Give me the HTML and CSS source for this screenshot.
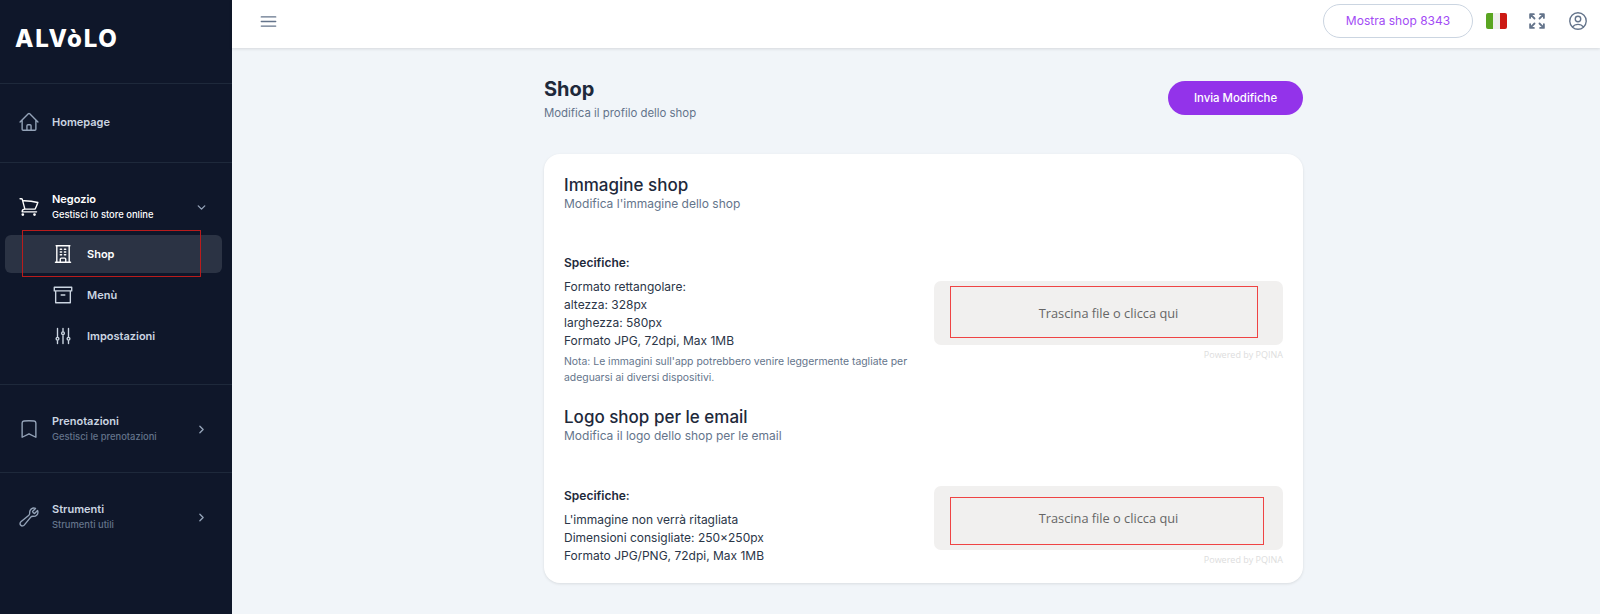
FILE: index.html
```html
<!DOCTYPE html>
<html lang="it">
<head>
    <meta charset="UTF-8">
    <meta name="viewport" content="width=device-width, initial-scale=1.0">
    <title>Shop | Alvolo</title>
    <link rel="stylesheet" href="styles.css">
</head>
<body>
    <aside class="sidebar">
        <div class="logo-row"><span class="logo">ALVòLO</span></div>

        <div class="nav-section home-section">
            <div class="nav-row">
                <svg class="nav-icon" viewBox="0 0 24 24"><path d="M2.25 12l8.954-8.955c.44-.439 1.152-.439 1.591 0L21.75 12M4.5 9.75v10.125c0 .621.504 1.125 1.125 1.125H9.75v-4.875c0-.621.504-1.125 1.125-1.125h2.25c.621 0 1.125.504 1.125 1.125V21h4.125c.621 0 1.125-.504 1.125-1.125V9.75M8.25 21h8.25"/></svg>
                <div class="nav-text"><div class="nav-title">Homepage</div></div>
            </div>
        </div>

        <div class="nav-section shop-section">
            <div class="nav-row active">
                <svg class="nav-icon" viewBox="0 0 24 24"><path d="M2.25 3h1.386c.51 0 .955.343 1.087.835l.383 1.437M7.5 14.25a3 3 0 00-3 3h15.75m-12.75-3h11.218c1.121-2.3 2.1-4.684 2.924-7.138a60.114 60.114 0 00-16.536-1.84M7.5 14.25L5.106 5.272M6 20.25a.75.75 0 11-1.5 0 .75.75 0 011.5 0zm12.75 0a.75.75 0 11-1.5 0 .75.75 0 011.5 0z"/></svg>
                <div class="nav-text">
                    <div class="nav-title">Negozio</div>
                    <div class="nav-sub">Gestisci lo store online</div>
                </div>
                <svg class="nav-arrow" viewBox="0 0 24 24"><path d="M6 9l6 6 6-6"/></svg>
            </div>
            <div class="sub-list">
                <div class="sub-item current">
                    <svg class="sub-icon" viewBox="0 0 24 24"><path d="M3.75 21h16.5M4.5 3h15M5.25 3v18m13.5-18v18M9 6.75h1.5m-1.5 3h1.5m-1.5 3h1.5m3-6H15m-1.5 3H15m-1.5 3H15M9 21v-3.375c0-.621.504-1.125 1.125-1.125h3.75c.621 0 1.125.504 1.125 1.125V21"/></svg>
                    <span>Shop</span>
                    <div class="mark mark-nav"></div>
                </div>
                <div class="sub-item">
                    <svg class="sub-icon" viewBox="0 0 24 24"><path d="M2.5 3.5h19v4h-19zM4 7.5v13h16v-13M10 12h4"/></svg>
                    <span>Menù</span>
                </div>
                <div class="sub-item">
                    <svg class="sub-icon" viewBox="0 0 24 24"><path d="M6 13.5V3.75m0 9.75a1.5 1.5 0 010 3m0-3a1.5 1.5 0 000 3m0 3.75V16.5m12-3V3.75m0 9.75a1.5 1.5 0 010 3m0-3a1.5 1.5 0 000 3m0 3.75V16.5m-6-9V3.75m0 3.75a1.5 1.5 0 010 3m0-3a1.5 1.5 0 000 3m0 9.75V10.5"/></svg>
                    <span>Impostazioni</span>
                </div>
            </div>
        </div>

        <div class="nav-section group-section">
            <div class="nav-row">
                <svg class="nav-icon" viewBox="0 0 24 24"><path d="M17.593 3.322c1.1.128 1.907 1.077 1.907 2.185V21L12 17.25 4.5 21V5.507c0-1.108.806-2.057 1.907-2.185a48.507 48.507 0 0111.186 0z"/></svg>
                <div class="nav-text">
                    <div class="nav-title">Prenotazioni</div>
                    <div class="nav-sub">Gestisci le prenotazioni</div>
                </div>
                <svg class="nav-arrow" viewBox="0 0 24 24"><path d="M9 6l6 6-6 6"/></svg>
            </div>
        </div>

        <div class="nav-section group-section">
            <div class="nav-row">
                <svg class="nav-icon" viewBox="0 0 24 24"><path d="M21.75 6.75a4.5 4.5 0 01-4.884 4.484c-1.076-.091-2.264.071-2.95.904l-7.152 8.684a2.548 2.548 0 11-3.586-3.586l8.684-7.152c.833-.686.995-1.874.904-2.95a4.5 4.5 0 016.336-4.486l-3.276 3.276a3.004 3.004 0 002.25 2.25l3.276-3.276c.256.565.398 1.192.398 1.852z"/></svg>
                <div class="nav-text">
                    <div class="nav-title">Strumenti</div>
                    <div class="nav-sub">Strumenti utili</div>
                </div>
                <svg class="nav-arrow" viewBox="0 0 24 24"><path d="M9 6l6 6-6 6"/></svg>
            </div>
        </div>
    </aside>

    <div class="main">
        <header class="topbar">
            <svg class="menu-icon" viewBox="0 0 24 24"><path d="M3.75 6.75h16.5M3.75 12h16.5m-16.5 5.25h16.5"/></svg>
            <div class="topbar-right">
                <div class="shop-pill">Mostra shop 8343</div>
                <div class="flag"><span class="green"></span><span class="white"></span><span class="red"></span></div>
                <svg class="expand" viewBox="0 0 24 24"><path d="M3.75 3.75v4.5m0-4.5h4.5m-4.5 0L9 9M3.75 20.25v-4.5m0 4.5h4.5m-4.5 0L9 15M20.25 3.75h-4.5m4.5 0v4.5m0-4.5L15 9m5.25 11.25h-4.5m4.5 0v-4.5m0 4.5L15 15"/></svg>
                <svg class="user-icon" viewBox="0 0 24 24"><path d="M17.982 18.725A7.488 7.488 0 0012 15.75a7.488 7.488 0 00-5.982 2.975m11.963 0a9 9 0 10-11.963 0m11.963 0A8.966 8.966 0 0112 21a8.966 8.966 0 01-5.982-2.275M15 9.75a3 3 0 11-6 0 3 3 0 016 0z"/></svg>
            </div>
        </header>

        <div class="content">
            <div class="page-head">
                <div>
                    <h1>Shop</h1>
                    <div class="page-sub">Modifica il profilo dello shop</div>
                </div>
                <button class="send-btn">Invia Modifiche</button>
            </div>

            <div class="card">
                <section class="block first">
                    <h2>Immagine shop</h2>
                    <div class="block-sub">Modifica l'immagine dello shop</div>
                    <div class="spec-row">
                        <div class="spec-text">
                            <div class="spec-title">Specifiche:</div>
                            <p>Formato rettangolare:</p>
                            <p>altezza: 328px</p>
                            <p>larghezza: 580px</p>
                            <p>Formato JPG, 72dpi, Max 1MB</p>
                            <p class="note">Nota: Le immagini sull'app potrebbero venire leggermente tagliate per adeguarsi ai diversi dispositivi.</p>
                        </div>
                        <div class="upload">
                            <div class="drop">Trascina file o clicca qui<div class="mark mark-one"></div></div>
                            <div class="powered">Powered by PQINA</div>
                        </div>
                    </div>
                </section>

                <section class="block">
                    <h2>Logo shop per le email</h2>
                    <div class="block-sub">Modifica il logo dello shop per le email</div>
                    <div class="spec-row">
                        <div class="spec-text">
                            <div class="spec-title">Specifiche:</div>
                            <p>L'immagine non verrà ritagliata</p>
                            <p>Dimensioni consigliate: 250×250px</p>
                            <p>Formato JPG/PNG, 72dpi, Max 1MB</p>
                        </div>
                        <div class="upload">
                            <div class="drop">Trascina file o clicca qui<div class="mark mark-two"></div></div>
                            <div class="powered">Powered by PQINA</div>
                        </div>
                    </div>
                </section>
            </div>
        </div>
    </div>
</body>
</html>
```

FILE: styles.css
```css
:root {
    --navy: #0f172a;
    --purple: #9333ea;
    --line: #1e293b;
    --slate: #64748b;
    --ink: #1e293b;
}
* {
    box-sizing: border-box;
}
body {
    margin: 0;
    height: 614px;
    overflow: hidden;
    display: flex;
    font-family: 'Inter', sans-serif;
    background: #f1f5f9;
    color: var(--ink);
}
svg {
    fill: none;
    stroke: currentColor;
    stroke-width: 1.5;
    stroke-linecap: round;
    stroke-linejoin: round;
    flex-shrink: 0;
}

/* sidebar */
.sidebar {
    width: 232px;
    flex-shrink: 0;
    background: var(--navy);
    color: #fff;
}
.logo-row {
    height: 84px;
    padding: 23px 0 0 15px;
    border-bottom: 1px solid var(--line);
}
.logo {
    font-size: 24px;
    line-height: 32px;
    font-weight: 800;
    letter-spacing: 1.7px;
}
.nav-section {
    border-bottom: 1px solid var(--line);
}
.home-section {
    height: 79px;
    padding-top: 20px;
}
.shop-section {
    height: 222px;
    padding-top: 26px;
}
.group-section {
    height: 88px;
    padding-top: 26px;
}
.group-section:last-child {
    border-bottom: none;
}
.nav-row {
    display: flex;
    align-items: center;
    height: 36px;
    padding: 0 24px 0 18px;
    color: #94a3b8;
}
.nav-icon {
    width: 22px;
    height: 22px;
    margin-right: 12px;
}
.nav-text {
    flex: 1;
}
.nav-title {
    font-size: 11px;
    line-height: 15px;
    font-weight: 600;
    color: #cbd5e1;
}
.nav-sub {
    font-size: 9.4px;
    line-height: 15px;
    font-weight: 500;
    color: #64748b;
}
.nav-arrow {
    width: 13px;
    height: 13px;
    stroke-width: 2.5;
}
.nav-row.active,
.nav-row.active .nav-title,
.nav-row.active .nav-sub {
    color: #fff;
}
.nav-row.active .nav-arrow {
    color: #94a3b8;
}
.sub-list {
    margin-top: 10px;
}
.sub-item {
    position: relative;
    display: flex;
    align-items: center;
    height: 38px;
    margin: 0 10px 3px 5px;
    padding-left: 47px;
    font-size: 11px;
    font-weight: 600;
    color: #cbd5e1;
    border-radius: 6px;
}
.sub-item.current {
    background: #2b3344;
    color: #fff;
}
.sub-icon {
    width: 22px;
    height: 22px;
    margin-right: 13px;
}

/* red annotation boxes from the screenshot */
.mark {
    position: absolute;
    border: 1px solid #ef4444;
}
.mark-nav {
    left: 17px;
    top: -5px;
    width: 179px;
    height: 47px;
    border-color: #b91c1c;
}
.mark-one {
    left: 16px;
    top: 5px;
    width: 308px;
    height: 52px;
}
.mark-two {
    left: 16px;
    top: 11px;
    width: 314px;
    height: 48px;
}

/* topbar */
.main {
    flex: 1;
    min-width: 0;
}
.topbar {
    height: 48px;
    display: flex;
    align-items: center;
    justify-content: space-between;
    padding: 0 11px 6px 26px;
    background: #fff;
    box-shadow: 0 1px 3px rgba(0,0,0,0.12);
}
.menu-icon {
    width: 21px;
    height: 21px;
    color: #64748b;
}
.topbar-right {
    display: flex;
    align-items: center;
}
.shop-pill {
    width: 150px;
    height: 34px;
    line-height: 32px;
    text-align: center;
    font-size: 12px;
    color: #a24bf5;
    border: 1px solid #cbd5e1;
    border-radius: 17px;
}
.flag {
    display: flex;
    width: 21px;
    height: 16px;
    margin: 0 20px 0 13px;
    border-radius: 2px;
    overflow: hidden;
}
.flag span {
    flex: 1;
}
.green { background: #5aa521; }
.white { background: #eeeeee; }
.red { background: #cc1a14; }
.expand {
    width: 20px;
    height: 20px;
    margin-right: 20px;
    color: #64748b;
    stroke-width: 2.2;
}
.user-icon {
    width: 22px;
    height: 22px;
    color: #64748b;
}

/* page content */
.content {
    width: 759px;
    margin-left: 312px;
}
.page-head {
    display: flex;
    justify-content: space-between;
    align-items: flex-start;
    padding-top: 28px;
    height: 106px;
}
h1 {
    margin: 0;
    font-size: 20px;
    line-height: 27px;
    font-weight: 700;
}
.page-sub {
    font-size: 11.4px;
    line-height: 18px;
    margin-top: 1px;
    color: var(--slate);
}
.send-btn {
    margin-top: 5px;
    width: 135px;
    height: 34px;
    border: none;
    border-radius: 17px;
    background: var(--purple);
    color: #fff;
    font-family: inherit;
    font-size: 11.4px;
    font-weight: 500;
}
.card {
    height: 429px;
    padding: 20px;
    background: #fff;
    border-radius: 16px;
    box-shadow: 0 1px 3px rgba(0,0,0,0.1);
}
.block.first {
    height: 232px;
}
h2 {
    margin: 0;
    font-size: 17px;
    line-height: 22px;
    font-weight: 500;
}
.block-sub {
    margin-top: -1px;
    font-size: 12px;
    line-height: 18px;
    color: var(--slate);
}
.spec-row {
    display: grid;
    grid-template-columns: 1fr 349px;
    column-gap: 20px;
    align-items: center;
    margin-top: 41px;
}
.spec-title {
    margin-bottom: 6px;
    font-size: 12px;
    line-height: 18px;
    font-weight: 600;
}
.spec-text p {
    margin: 0;
    font-size: 12px;
    line-height: 18px;
    color: #2b3648;
}
.spec-text .note {
    margin-top: 4px;
    font-size: 10.4px;
    line-height: 16px;
    color: var(--slate);
}
.drop {
    position: relative;
    height: 64px;
    line-height: 64px;
    text-align: center;
    font-family: 'Open Sans', sans-serif;
    font-size: 12.8px;
    color: #666;
    background: #f1f0ef;
    border-radius: 7px;
}
.powered {
    margin-top: 4px;
    text-align: right;
    font-family: 'Open Sans', sans-serif;
    font-size: 9px;
    line-height: 11px;
    color: #ddd;
}
```
